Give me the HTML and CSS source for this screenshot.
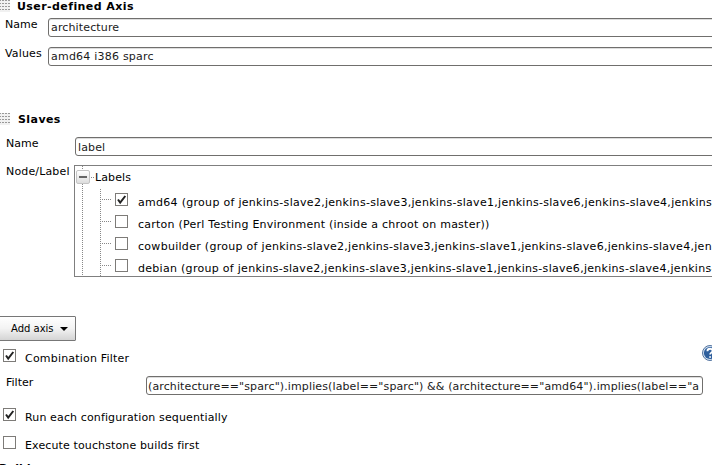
FILE: index.html
```
<!DOCTYPE html>
<html lang="en">
<head>
<meta charset="utf-8">
<title>Configuration Matrix</title>
<link rel="stylesheet" href="styles.css">
</head>
<body>
<main class="page">
  <header class="axis-head first"><i class="grip"></i><b>User-defined Axis</b></header>
  <div class="row r-arch"><label>Name</label><div class="field"><span>architecture</span></div></div>
  <div class="row r-values"><label>Values</label><div class="field"><span>amd64 i386 sparc</span></div></div>
  <header class="axis-head second"><i class="grip"></i><b>Slaves</b></header>
  <div class="row r-label"><label>Name</label><div class="field"><span>label</span></div></div>
  <div class="row r-tree"><label>Node/Label</label>
    <div class="tree">
      <div class="root"><i class="toggle"></i><i class="dash"></i><span>Labels</span></div>
      <ul>
        <li><i class="dots"></i><svg class="check" viewBox="0 0 13 13"><rect x=".5" y=".5" width="12" height="12"/><path d="M3 6.5 5.2 9.5 10.3 3"/></svg><span>amd64 (group of jenkins-slave2,jenkins-slave3,jenkins-slave1,jenkins-slave6,jenkins-slave4,jenkins-slave5)</span></li>
        <li><i class="dots"></i><svg class="check" viewBox="0 0 13 13"><rect x=".5" y=".5" width="12" height="12"/></svg><span class="short">carton (Perl Testing Environment (inside a chroot on master))</span></li>
        <li><i class="dots"></i><svg class="check" viewBox="0 0 13 13"><rect x=".5" y=".5" width="12" height="12"/></svg><span>cowbuilder (group of jenkins-slave2,jenkins-slave3,jenkins-slave1,jenkins-slave6,jenkins-slave4,jenkins-slave5)</span></li>
        <li><i class="dots"></i><svg class="check" viewBox="0 0 13 13"><rect x=".5" y=".5" width="12" height="12"/></svg><span>debian (group of jenkins-slave2,jenkins-slave3,jenkins-slave1,jenkins-slave6,jenkins-slave4,jenkins-slave5)</span></li>
      </ul>
    </div>
  </div>
  <button class="add" type="button"><span>Add axis</span><svg class="caret" viewBox="0 0 8 4"><path d="M0 0h8L4 4z"/></svg></button>
  <div class="option combo"><svg class="check" viewBox="0 0 13 13"><rect x=".5" y=".5" width="12" height="12"/><path d="M3 6.5 5.2 9.5 10.3 3"/></svg><span>Combination Filter</span>
    <svg class="help" viewBox="0 0 16 16"><circle class="rim" cx="8" cy="8" r="7.5"/><circle class="disc" cx="8" cy="8" r="6.1"/><path d="M5.4 6.2C5.5 2.9 10.7 3 10.5 6.1 10.3 7.6 8.1 7.8 8.1 9.6M8.1 11.2v1.6"/></svg></div>
  <div class="row r-filter"><label>Filter</label><div class="field"><span>(architecture=="sparc").implies(label=="sparc") &amp;&amp; (architecture=="amd64").implies(label=="a</span></div></div>
  <div class="option run"><svg class="check" viewBox="0 0 13 13"><rect x=".5" y=".5" width="12" height="12"/><path d="M3 6.5 5.2 9.5 10.3 3"/></svg><span>Run each configuration sequentially</span></div>
  <div class="option touch"><svg class="check" viewBox="0 0 13 13"><rect x=".5" y=".5" width="12" height="12"/></svg><span>Execute touchstone builds first</span></div>
  <b class="build">Build</b>
</main>
</body>
</html>
```
FILE: styles.css
```
* { box-sizing: border-box; }
html, body { margin: 0; overflow: hidden; background: #fff; }
body { font: 11px/14px "DejaVu Sans", sans-serif; color: #000; }
.page { width: 712px; height: 465px; overflow: hidden; display: flex; flex-direction: column; align-items: flex-start; }
.page > * { flex: none; }
span, label, b { white-space: nowrap; display: block; }

.axis-head { display: flex; height: 14px; letter-spacing: .42px; }
.axis-head b { margin-top: 1px; }
.grip { width: 10px; height: 12px; margin: 1px 7px 0 0; background: conic-gradient(from 90deg at 1px 1px, transparent 90deg, transparent 270deg, #999 0) 1px 0 / 3px 3px, #f1f1f1; }
.first { margin-top: -1px; }
.second { margin-top: 46px; }
.second .grip { margin-right: 8px; }

.row { display: flex; width: 712px; overflow: hidden; }
.row label { flex: none; width: 43px; padding-left: 5px; }
.field { flex: none; width: 700px; height: 19px; padding: 2px 0 0 2px; border: 1px solid #706f6d; border-radius: 3px; background: #fff; overflow: hidden; color: #1a1a1a; box-shadow: inset 0 1px 0 #ddd; letter-spacing: .14px; }
.r-arch { margin-top: 4px; height: 20px; padding-top: 1px; }
.r-arch label, .r-values label { width: 48px; }
.r-values { margin-top: 10px; height: 19px; }
.r-values label { letter-spacing: .15px; }
.r-values .field { letter-spacing: .22px; }
.r-label { margin-top: 11px; height: 19px; }
.r-label label { width: 75px; padding-left: 6px; }
.r-label .field, .r-filter .field { padding-top: 3px; }
.r-tree { margin-top: 9px; height: 112px; }
.r-tree label { width: 74px; padding-left: 6px; letter-spacing: .15px; }

.tree { flex: none; width: 700px; height: 112px; border: 1px solid #7f7f7f; overflow: hidden; background: repeating-linear-gradient(#888 0 1px, transparent 1px 2px) 7px 0 / 1px 100% no-repeat; }
.root { display: flex; height: 22px; padding: 4px 0 0 1px; }
.root span { margin-top: 1px; letter-spacing: .1px; }
.toggle { width: 14px; height: 14px; border: 1px solid #c4c4c4; border-radius: 2px; background: linear-gradient(#666, #666) 2px 5px / 8px 2px no-repeat, linear-gradient(#fff, #ddd); }
.dash { width: 3px; height: 1px; margin: 7px 1px 0 1px; background: repeating-linear-gradient(90deg, #888 0 1px, transparent 1px 2px); }
.tree ul { list-style: none; margin: 1px 0 0 25px; padding: 4px 0 0; background: repeating-linear-gradient(#888 0 1px, transparent 1px 2px) 0 0 / 1px 100% no-repeat; }
.tree li { display: flex; height: 22px; }
.dots { flex: none; width: 11px; height: 1px; margin: 6px 4px 0 0; background: repeating-linear-gradient(90deg, #888 0 1px, transparent 1px 2px); }
.tree li span { margin: 3px 0 0 10px; letter-spacing: .29px; }
.tree li .short { letter-spacing: .24px; }

.check { flex: none; width: 13px; height: 13px; fill: none; }
.check rect { fill: #fff; stroke: #7d7b78; }
.check path { stroke: #222; stroke-width: 2; }

.add { display: flex; width: 78px; height: 25px; margin: 39px 0 0 -2px; padding: 5px 0 0 12px; border: 1px solid #777; border-radius: 1px; background: linear-gradient(#fff, #f3f3f3 50%, #d4d4d4); font: inherit; font-size: 10px; color: #000; }
.caret { width: 8px; height: 4px; margin: 5px 0 0 6px; }
.option { display: flex; width: 720px; height: 16px; padding-left: 3px; letter-spacing: .13px; }
.option span { margin: 3px 0 0 9px; }
.combo { margin-top: 8px; }
.combo span { letter-spacing: .2px; }
.help { width: 16px; height: 16px; margin: -4px 2px 0 auto; }
.rim { fill: #d4e2f1; stroke: #52739f; }
.disc { fill: #2e5f9d; }
.help path { fill: none; stroke: #fff; stroke-width: 1.8; }
.r-filter { margin-top: 11px; height: 19px; }
.r-filter label { width: 146px; padding-left: 6px; }
.r-filter .field { width: 557px; padding-left: 1px; letter-spacing: .12px; }
.run { margin-top: 13px; }
.touch { margin-top: 12px; }
.build { margin: 10px 0 0 -1px; }
```
